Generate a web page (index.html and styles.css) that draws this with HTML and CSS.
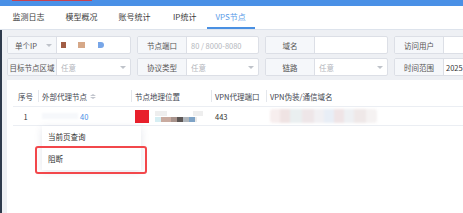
FILE: index.html
```html
<!DOCTYPE html>
<html lang="zh-CN">
<head>
<meta charset="utf-8">
<title>VPS节点</title>
<link rel="stylesheet" href="styles.css">
</head>
<body>
<div class="topbar"><div class="topbar-red"></div></div>
<nav class="tabs">
  <div class="tab">监测日志</div>
  <div class="tab">模型概况</div>
  <div class="tab">账号统计</div>
  <div class="tab">IP统计</div>
  <div class="tab active">VPS节点</div>
</nav>
<div class="main">
  <div class="edge"></div>
  <div class="content">
    <div class="filters">
      <div class="group">
        <div class="label select-label"><span>单个IP</span><i class="caret"></i></div>
        <div class="control"><span class="blur b1"></span><span class="blur b2"></span><span class="blur b3"></span></div>
      </div>
      <div class="group">
        <div class="label">节点端口</div>
        <div class="control placeholder">80 / 8000-8080</div>
      </div>
      <div class="group">
        <div class="label">域名</div>
        <div class="control"></div>
      </div>
      <div class="group">
        <div class="label">访问用户</div>
        <div class="control"></div>
      </div>
      <div class="group">
        <div class="label">目标节点区域</div>
        <div class="control placeholder select"><span>任意</span><i class="caret"></i></div>
      </div>
      <div class="group">
        <div class="label">协议类型</div>
        <div class="control placeholder select"><span>任意</span><i class="caret"></i></div>
      </div>
      <div class="group">
        <div class="label">链路</div>
        <div class="control placeholder select"><span>任意</span><i class="caret"></i></div>
      </div>
      <div class="group last">
        <div class="label">时间范围</div>
        <div class="control value">2025</div>
      </div>
    </div>
    <div class="card">
      <div class="table">
        <div class="row head">
          <div class="cell c1 center">序号</div>
          <div class="cell c2"><span class="sep"></span>外部代理节点<span class="sort"><i class="up"></i><i class="down"></i></span></div>
          <div class="cell c3"><span class="sep"></span>节点地理位置</div>
          <div class="cell c4"><span class="sep"></span>VPN代理端口</div>
          <div class="cell c5"><span class="sep"></span>VPN伪装/通信域名</div>
        </div>
        <div class="row body">
          <div class="cell c1 center">1</div>
          <div class="cell c2"><span class="faint"></span><span class="link">40</span></div>
          <div class="cell c3"><span class="flag"></span><span class="geo"><span class="geo-top"></span><span class="geo-bot"></span></span></div>
          <div class="cell c4">443</div>
          <div class="cell c5"><span class="domain"></span></div>
        </div>
        <div class="menu">
          <div class="menu-item">当前页查询</div>
          <div class="menu-item">阻断</div>
        </div>
        <div class="mark"></div>
      </div>
    </div>
  </div>
</div>
</body>
</html>
```
FILE: styles.css
```css
* { box-sizing: border-box; }
html, body { margin: 0; padding: 0; }
body {
  width: 463px;
  height: 213px;
  overflow: hidden;
  background: #eef0f4;
  font-family: "Noto Sans CJK SC", "Noto Sans", sans-serif;
  font-size: 7.5px;
  color: #333;
}
.topbar {
  height: 6px;
  background: #4a90e6;
}
.topbar-red {
  margin-left: 12px;
  width: 80px;
  height: 1px;
  background: #c8414f;
}
.tabs {
  display: flex;
  height: 24px;
  background: #fff;
  border-bottom: 1px solid #dde3ec;
  padding-left: 2px;
}
.tab {
  height: 23px;
  line-height: 22px;
  padding: 0 10.5px;
  font-size: 8px;
  color: #3a3a3a;
  border-bottom: 2px solid transparent;
}
.tab:nth-child(4) { padding: 0 11px 0 12px; }
.tab.active {
  color: #5b9be8;
  border-bottom-color: #4a90e2;
  padding: 0 9px 0 8px;
}
.main {
  display: flex;
  height: 183px;
}
.edge {
  width: 2px;
  background: #2e3a4c;
}
.content {
  flex: 1;
  display: flex;
  flex-direction: column;
  padding: 6px 0 0 5px;
  min-width: 0;
  overflow: hidden;
}
.filters {
  display: grid;
  grid-template-columns: 124px 122px 123px 123px;
  column-gap: 6px;
  row-gap: 4px;
}
.group {
  display: flex;
  height: 18px;
  border: 1px solid #dcdfe6;
  border-radius: 2px;
  background: #fff;
  overflow: hidden;
}
.label {
  flex: 0 0 49px;
  background: #f5f7fa;
  border-right: 1px solid #dcdfe6;
  color: #555;
  display: flex;
  align-items: center;
  justify-content: center;
  white-space: nowrap;
}
.select-label {
  justify-content: space-between;
  padding: 0 4px 0 7px;
  color: #555;
}
.control {
  flex: 1;
  display: flex;
  align-items: center;
  padding: 0 4px 0 4px;
  white-space: nowrap;
  min-width: 0;
}
.placeholder { color: #b3b6bc; }
.value { color: #333; padding-left: 2px; }
.select { justify-content: space-between; }
.caret {
  width: 0;
  height: 0;
  border-left: 3px solid transparent;
  border-right: 3px solid transparent;
  border-top: 3px solid #bfc3ca;
}
.blur {
  display: inline-block;
  height: 6px;
  filter: blur(0.5px);
}
.b1 { width: 5px; background: #a15d45; margin-left: 0; }
.b2 { width: 7px; background: #d6a888; margin-left: 12px; }
.b3 { width: 6px; background: #77a6e8; margin-left: 13px; border-radius: 0 3px 3px 0; }
.card {
  flex: 1;
  margin-top: 4px;
  background: #fff;
  padding: 6px 0 0 6px;
}
.table {
  position: relative;
}
.row {
  display: flex;
  border-bottom: 1px solid #ebeef3;
}
.row.head { height: 21px; color: #3f4650; }
.row.body { height: 19px; color: #333; }
.cell {
  position: relative;
  display: flex;
  align-items: center;
  padding-left: 4px;
  white-space: nowrap;
}
.center { justify-content: center; padding-left: 0; }
.c1 { flex: 0 0 25px; }
.c2 { flex: 0 0 93px; }
.c3 { flex: 0 0 80px; }
.c4 { flex: 0 0 55px; }
.c5 { flex: 1; }
.sep {
  position: absolute;
  left: 0;
  top: 4px;
  width: 1px;
  height: 12px;
  background: #e4e7ec;
}
.sort {
  display: inline-flex;
  flex-direction: column;
  gap: 1px;
  margin-left: 3px;
}
.sort i {
  width: 0;
  height: 0;
  border-left: 3px solid transparent;
  border-right: 3px solid transparent;
}
.sort .up { border-bottom: 2.5px solid #c0c4cc; }
.sort .down { border-top: 2.5px solid #c0c4cc; }
.faint {
  display: inline-block;
  width: 36px;
  height: 6px;
  background: #f6f8fb;
  filter: blur(1px);
  margin-right: 2px;
}
.link { color: #4a8fe6; }
.flag {
  display: inline-block;
  width: 14px;
  height: 13px;
  background: #e8202c;
  filter: blur(0.4px);
}
.geo {
  display: inline-flex;
  flex-direction: column;
  margin-left: 6px;
  gap: 1px;
}
.geo-top {
  width: 48px;
  height: 5px;
  background: linear-gradient(90deg, #eeeeee 0 12px, #fff 12px 38px, #eeeeee 38px 48px);
  filter: blur(0.6px);
}
.geo-bot {
  width: 42px;
  height: 5px;
  background: linear-gradient(90deg, #d6eef3 0 6px, #c9aba0 6px 16px, #a8938c 16px 22px, #5d5755 22px 28px, #b0b6bc 28px 34px, #7ea3c6 34px 40px, #eaeaea 40px 42px);
  filter: blur(0.6px);
}
.domain {
  display: inline-block;
  width: 107px;
  height: 14px;
  background: linear-gradient(90deg, #f7eeee 0 10px, #efe3e3 10px 20px, #eaeff0 20px 32px, #eee6e8 32px 44px, #f1f0f3 44px 54px, #e8eef6 54px 64px, #efe4e6 64px 74px, #eef0f3 74px 84px, #efe8e8 84px 96px, #f5f2f2 96px 107px);
  filter: blur(1px);
  border-radius: 3px;
}
.menu {
  position: absolute;
  left: 29px;
  top: 40px;
  width: 99px;
  background: #fff;
  box-shadow: 0 2px 8px rgba(40, 60, 110, 0.12);
  padding: 0;
}
.menu-item {
  height: 22px;
  line-height: 22px;
  padding-left: 6px;
  color: #333;
}
.mark {
  position: absolute;
  left: 22px;
  top: 60px;
  width: 112px;
  height: 28px;
  border: 2.5px solid #f2474b;
  border-radius: 3px;
}
```
